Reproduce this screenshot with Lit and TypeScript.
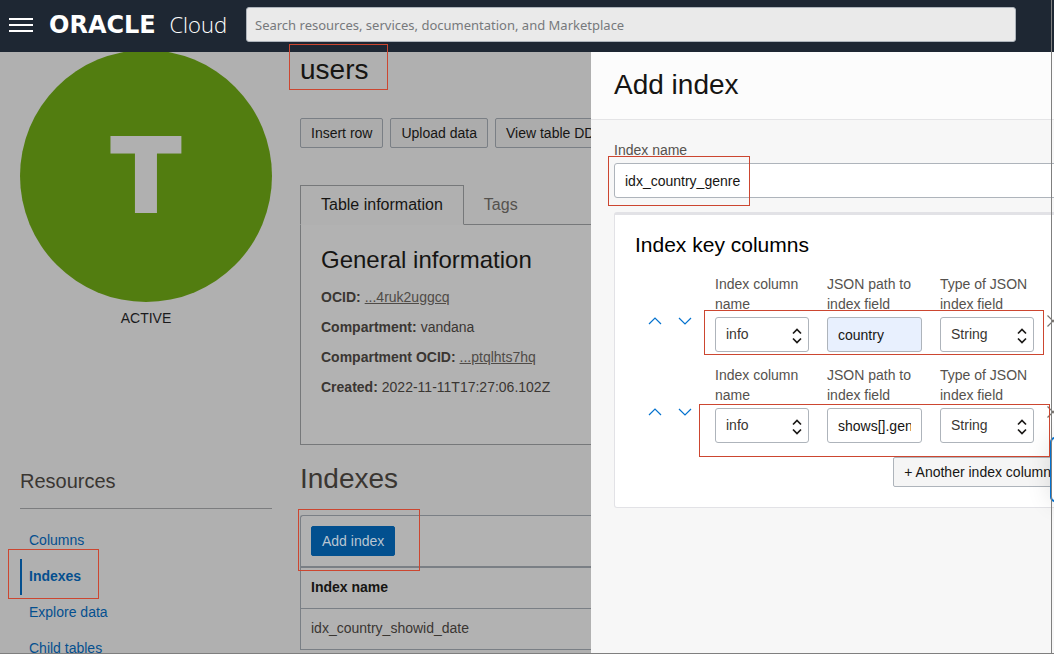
import { LitElement, html, css, svg } from "lit";
import { customElement, property } from "lit/decorators.js";

const chevronUp = html`<svg width="14" height="8" viewBox="0 0 14 8" aria-hidden="true">
  ${svg`<path d="M1 7 L7 1 L13 7" fill="none" stroke="currentColor" stroke-width="1.2" />`}
</svg>`;

const chevronDown = html`<svg width="14" height="8" viewBox="0 0 14 8" aria-hidden="true">
  ${svg`<path d="M1 1 L7 7 L13 1" fill="none" stroke="currentColor" stroke-width="1.2" />`}
</svg>`;

const cross = html`<svg width="12" height="12" viewBox="0 0 12 12" aria-hidden="true">
  ${svg`<path d="M0.5 0.5 L11.5 11.5 M11.5 0.5 L0.5 11.5" fill="none" stroke="currentColor" stroke-width="1.2" />`}
</svg>`;

const sorter = html`<svg class="sorter" width="10" height="16" viewBox="0 0 10 16" aria-hidden="true">
  ${svg`<path d="M1 5.5 L5 1.5 L9 5.5 M1 10.5 L5 14.5 L9 10.5" fill="none" stroke="#1a1816" stroke-width="1.7" />`}
</svg>`;

@customElement("console-header")
class ConsoleHeader extends LitElement {
  static styles = css`
    :host {
      display: flex;
      align-items: center;
      height: 52px;
      box-sizing: border-box;
      padding: 0 38px 3px 9px;
      background: #1e2733;
      color: #fff;
    }
    .menu {
      display: flex;
      flex: none;
      padding: 0;
      margin-right: 16px;
      border: 0;
      background: none;
      color: inherit;
    }
    .brand {
      display: flex;
      flex: none;
      align-items: baseline;
      justify-content: space-between;
      width: 178px;
      margin-right: 19px;
      color: inherit;
      text-decoration: none;
      line-height: 28px;
    }
    .oracle {
      font: bold 24px/28px "DejaVu Sans", sans-serif;
    }
    .cloud {
      font: 300 22px/28px "Open Sans", "Noto Sans", sans-serif;
    }
    .search {
      flex: 1;
      min-width: 0;
      height: 35px;
      box-sizing: border-box;
      padding: 0 8px;
      border: 1px solid #aeb4bb;
      border-radius: 3px;
      background: #eaeaea;
      font: 13px "Noto Sans", "Open Sans", sans-serif;
      color: #222;
    }
    .search::placeholder {
      color: #77797c;
      opacity: 1;
    }
  `;

  render() {
    return html`
      <button class="menu" aria-label="Navigation menu">
        <svg width="24" height="14" viewBox="0 0 24 14" aria-hidden="true">
          <path d="M0 1H24M0 7H24M0 13H24" stroke="#fff" stroke-width="2" />
        </svg>
      </button>
      <a class="brand" href="#"><span class="oracle">ORACLE</span><span class="cloud">Cloud</span></a>
      <input
        class="search"
        type="search"
        aria-label="Search"
        placeholder="Search resources, services, documentation, and Marketplace"
      />
    `;
  }
}

@customElement("table-details")
class TableDetails extends LitElement {
  static styles = css`
    :host {
      display: grid;
      grid-template-columns: 252px minmax(0, 1fr);
      gap: 28px;
      height: 100%;
      box-sizing: border-box;
      padding-left: 20px;
      overflow: hidden;
      background: #b0b0b0;
      color: #3a3632;
      font: 14px/20px "Liberation Sans", Arial, sans-serif;
    }
    .badge {
      display: flex;
      align-items: center;
      justify-content: center;
      height: 252px;
      box-sizing: border-box;
      margin-top: -2px;
      padding-top: 3px;
      border-radius: 50%;
      background: #527d10;
      color: #b0b0b0;
      font: bold 101px/1 "DejaVu Sans", sans-serif;
      -webkit-text-stroke: 3px #b0b0b0;
    }
    .status {
      margin: 6px 0 0;
      text-align: center;
      color: #1a1a1c;
    }
    .resources {
      margin: 139px 0 14px;
      padding-bottom: 13px;
      border-bottom: 1px solid #7c7d7f;
      font-size: 20px;
      line-height: 28px;
      font-weight: normal;
    }
    .links {
      display: flex;
      flex-direction: column;
    }
    .link {
      padding: 0 0 2px 7px;
      border-left: 2px solid transparent;
      line-height: 34px;
      color: #044f8f;
      text-decoration: none;
    }
    .current {
      border-color: #044f8f;
      font-weight: bold;
    }
    .title {
      margin: 0 0 30px;
      font-size: 28px;
      line-height: 36px;
      font-weight: normal;
      color: #161513;
    }
    .actions {
      display: flex;
      gap: 7px;
    }
    .action {
      flex: none;
      height: 30px;
      box-sizing: border-box;
      padding: 0 10px;
      border: 1px solid #7a7f85;
      border-radius: 2px;
      background: #acacac;
      color: #161513;
      font: inherit;
    }
    .primary {
      border-color: #02508f;
      background: #02508f;
      color: #b9c6d2;
    }
    .tabs {
      display: flex;
      margin-top: 37px;
    }
    .tab {
      height: 40px;
      box-sizing: border-box;
      padding: 0 20px;
      border: 0;
      border-bottom: 1px solid #76787a;
      background: none;
      color: #55524e;
      font: 16px/36px "Liberation Sans", Arial, sans-serif;
    }
    .selected {
      border: 1px solid #76787a;
      border-bottom-color: transparent;
      color: #161513;
    }
    .rest {
      flex: 1;
      border-bottom: 1px solid #76787a;
    }
    .panel {
      height: 220px;
      box-sizing: border-box;
      padding: 20px;
      border: solid #76787a;
      border-width: 0 0 1px 1px;
      background: #b2b2b2;
    }
    .subtitle {
      margin: 0 0 12px;
      font-size: 24px;
      line-height: 30px;
      font-weight: normal;
      color: #161513;
    }
    .facts {
      display: grid;
      gap: 10px;
      margin: 0;
    }
    .fact {
      display: flex;
      gap: 4px;
    }
    .fact dt {
      font-weight: bold;
    }
    .fact dd {
      margin: 0;
    }
    .ocid {
      color: #4f4b47;
    }
    .section {
      margin: 17px 0 19px;
      font-size: 28px;
      line-height: 34px;
      font-weight: normal;
    }
    .list {
      border: solid #7a7f85;
      border-width: 1px 0 0 1px;
      border-radius: 3px 0 0 0;
      background: #b2b2b2;
    }
    .toolbar {
      display: flex;
      padding: 10px;
      border-bottom: 2px solid #7a7f85;
    }
    .grid {
      width: 100%;
      border-collapse: collapse;
    }
    .grid th,
    .grid td {
      height: 38px;
      padding: 0 10px 2px;
      border-bottom: 1px solid #7a7f85;
      text-align: left;
    }
    .grid th {
      color: #161513;
    }
  `;

  render() {
    return html`
      <aside>
        <div class="badge" aria-hidden="true">T</div>
        <p class="status">ACTIVE</p>
        <h2 class="resources">Resources</h2>
        <nav class="links">
          <a class="link" href="#columns">Columns</a>
          <a class="link current" href="#indexes">Indexes</a>
          <a class="link" href="#explore">Explore data</a>
          <a class="link" href="#children">Child tables</a>
        </nav>
      </aside>
      <main>
        <h1 class="title">users</h1>
        <div class="actions">
          <button class="action">Insert row</button>
          <button class="action">Upload data</button>
          <button class="action">View table DDL</button>
        </div>
        <div class="tabs" role="tablist">
          <button class="tab selected" role="tab" aria-selected="true">Table information</button>
          <button class="tab" role="tab" aria-selected="false">Tags</button>
          <span class="rest"></span>
        </div>
        <section class="panel">
          <h2 class="subtitle">General information</h2>
          <dl class="facts">
            <div class="fact"><dt>OCID:</dt><dd><a class="ocid" href="#ocid">...4ruk2uggcq</a></dd></div>
            <div class="fact"><dt>Compartment:</dt><dd>vandana</dd></div>
            <div class="fact"><dt>Compartment OCID:</dt><dd><a class="ocid" href="#compartment">...ptqlhts7hq</a></dd></div>
            <div class="fact"><dt>Created:</dt><dd>2022-11-11T17:27:06.102Z</dd></div>
          </dl>
        </section>
        <h2 class="section">Indexes</h2>
        <div class="list">
          <div class="toolbar"><button class="action primary">Add index</button></div>
          <table class="grid">
            <thead><tr><th scope="col">Index name</th></tr></thead>
            <tbody>
              <tr><td>idx_country_showid_date</td></tr>
            </tbody>
          </table>
        </div>
      </main>
    `;
  }
}

@customElement("index-key-row")
class IndexKeyRow extends LitElement {
  @property() path = "";
  @property({ type: Boolean, reflect: true }) filled = false;

  static styles = css`
    :host {
      display: flex;
      font: 14px/20px "Liberation Sans", Arial, sans-serif;
      color: #55524e;
    }
    .order {
      display: flex;
      flex: none;
      width: 75px;
      padding: 32px 0 0 5px;
    }
    .icon {
      display: flex;
      flex: none;
      align-items: center;
      justify-content: center;
      width: 30px;
      height: 30px;
      padding: 0;
      border: 0;
      background: none;
      color: #0572ce;
    }
    .fields {
      display: grid;
      flex: none;
      grid-template-columns: 94px 95px 94px;
      gap: 18px;
    }
    .field {
      display: flex;
      flex-direction: column;
      gap: 3px;
    }
    .box {
      position: relative;
      display: flex;
    }
    .control {
      width: 100%;
      height: 35px;
      box-sizing: border-box;
      margin: 0;
      padding: 0 10px;
      border: 1px solid #aeb4bb;
      border-radius: 3px;
      background: #fff;
      color: #161513;
      font: inherit;
    }
    select.control {
      appearance: none;
      padding-bottom: 2px;
      color: #3a3632;
    }
    :host([filled]) input.control {
      background: #e8f0fe;
    }
    .sorter {
      position: absolute;
      right: 7px;
      top: 11px;
      pointer-events: none;
    }
    .remove {
      width: 18px;
      margin: 32px 0 0 10px;
      color: #77736e;
    }
  `;

  render() {
    return html`
      <div class="order">
        <button class="icon" aria-label="Move up">${chevronUp}</button>
        <button class="icon" aria-label="Move down">${chevronDown}</button>
      </div>
      <div class="fields">
        <div class="field">
          <label for="column">Index column name</label>
          <div class="box"><select id="column" class="control"><option>info</option></select>${sorter}</div>
        </div>
        <div class="field">
          <label for="path">JSON path to index field</label>
          <div class="box"><input id="path" class="control" .value=${this.path} /></div>
        </div>
        <div class="field">
          <label for="type">Type of JSON index field</label>
          <div class="box"><select id="type" class="control"><option>String</option></select>${sorter}</div>
        </div>
      </div>
      <button class="icon remove" aria-label="Remove">${cross}</button>
    `;
  }
}

@customElement("index-drawer")
class IndexDrawer extends LitElement {
  static styles = css`
    :host {
      display: block;
      overflow: hidden;
      background: #f7f7f7;
      color: #161513;
      font: 14px/20px "Liberation Sans", Arial, sans-serif;
    }
    .head {
      padding: 16px 23px 17px;
      border-bottom: 1px solid #e4e4e6;
      background: #fcfcfc;
    }
    .title {
      margin: 0;
      font-size: 28px;
      line-height: 34px;
      font-weight: normal;
    }
    .form {
      display: flex;
      flex-direction: column;
      min-width: max-content;
      padding: 20px 23px;
    }
    .label {
      margin-bottom: 3px;
      color: #55524e;
    }
    .name {
      height: 35px;
      box-sizing: border-box;
      margin: 0 0 14px;
      padding: 0 10px;
      border: 1px solid #aeb4bb;
      border-radius: 3px;
      background: #fff;
      color: #161513;
      font: inherit;
    }
    .card {
      display: grid;
      justify-content: start;
      padding: 17px 20px 20px;
      border: 1px solid #e2e2e6;
      border-top-width: 3px;
      border-radius: 3px;
      background: #fff;
    }
    .heading {
      margin: 0 0 16px;
      font-size: 21px;
      line-height: 26px;
      font-weight: normal;
      color: #000;
    }
    .rows {
      display: grid;
      gap: 13px;
    }
    .add {
      justify-self: end;
      height: 30px;
      margin: 14px 0 0;
      padding: 0 10px;
      border: 1px solid #aeb4bb;
      border-radius: 2px;
      background: #f5f5f5;
      color: #161513;
      font: inherit;
    }
  `;

  render() {
    return html`
      <header class="head"><h2 class="title">Add index</h2></header>
      <form class="form">
        <label class="label" for="name">Index name</label>
        <input id="name" class="name" .value=${"idx_country_genre"} />
        <section class="card">
          <h3 class="heading">Index key columns</h3>
          <div class="rows">
            <index-key-row path="country" filled></index-key-row>
            <index-key-row path="shows[].genre"></index-key-row>
          </div>
          <button class="add" type="button">+ Another index column</button>
        </section>
      </form>
    `;
  }
}

@customElement("app-root")
class AppRoot extends LitElement {
  static styles = css`
    :host {
      position: relative;
      display: grid;
      grid-template-rows: auto minmax(0, 1fr);
      grid-template-columns: minmax(0, 1fr);
      height: 100vh;
      overflow: hidden;
    }
    .stage {
      position: relative;
      min-height: 0;
    }
    .drawer {
      position: absolute;
      inset: 0 0 0 591px;
    }
    .help {
      position: absolute;
      right: -40px;
      top: 437px;
      width: 44px;
      height: 65px;
      box-sizing: border-box;
      border: 2px solid #0572ce;
      border-radius: 5px;
      background: #fff;
      box-shadow: 0 0 24px rgba(0, 0, 0, 0.12);
    }
    .edge {
      position: absolute;
      inset: 0 2px 0 0;
      border: solid #7f7f7f;
      border-width: 0 1px 0 0;
      pointer-events: none;
    }
    .floor {
      position: absolute;
      inset: auto 0 0;
      border-bottom: 1px solid #7f7f7f;
      pointer-events: none;
    }
    .mark {
      position: absolute;
      box-sizing: border-box;
      border: 1px solid #cc4630;
      pointer-events: none;
    }
    .on-title {
      left: 289px;
      top: 44px;
      width: 99px;
      height: 46px;
    }
    .on-name {
      left: 608px;
      top: 156px;
      width: 142px;
      height: 50px;
    }
    .on-first {
      left: 704px;
      top: 310px;
      width: 340px;
      height: 45px;
    }
    .on-second {
      left: 699px;
      top: 404px;
      width: 351px;
      height: 53px;
    }
    .on-link {
      left: 8px;
      top: 549px;
      width: 91px;
      height: 50px;
    }
    .on-add {
      left: 298px;
      top: 509px;
      width: 122px;
      height: 62px;
    }
  `;

  render() {
    return html`
      <console-header></console-header>
      <div class="stage">
        <table-details></table-details>
        <index-drawer class="drawer"></index-drawer>
      </div>
      <button class="help" aria-label="Help"></button>
      <div class="mark on-title"></div>
      <div class="mark on-name"></div>
      <div class="mark on-first"></div>
      <div class="mark on-second"></div>
      <div class="mark on-link"></div>
      <div class="mark on-add"></div>
      <div class="edge"></div>
      <div class="floor"></div>
    `;
  }
}
